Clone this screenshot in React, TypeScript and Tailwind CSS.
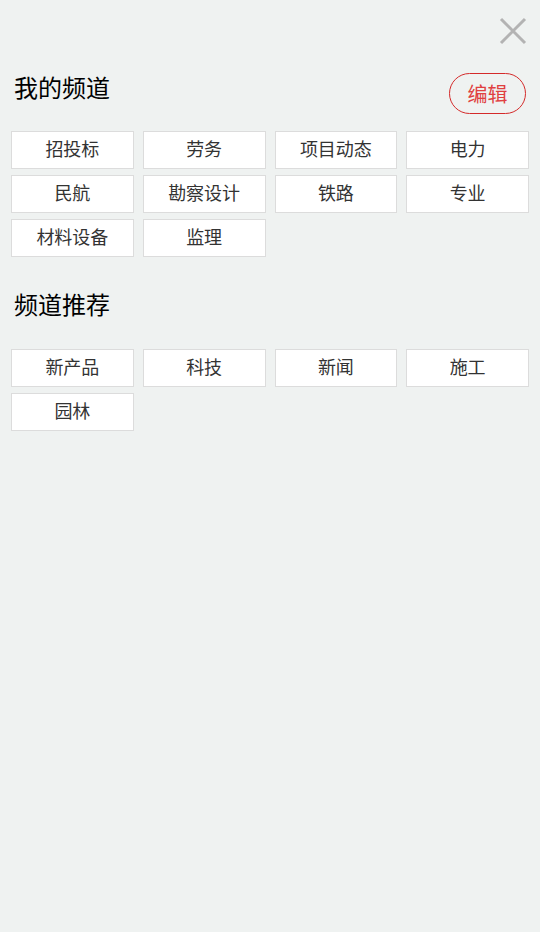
import React from 'react';

const myChannels = ['招投标', '劳务', '项目动态', '电力', '民航', '勘察设计', '铁路', '专业', '材料设备', '监理'];
const recommended = ['新产品', '科技', '新闻', '施工', '园林'];

function ChannelGrid({ items }: { items: string[] }) {
  return (
    <div className="grid grid-cols-4 gap-x-[9px] gap-y-[6px] px-[11px]">
      {items.map((name) => (
        <div
          key={name}
          className="h-[38px] flex items-center justify-center pb-[3px] bg-white border border-[#dcdcdc] text-[18px] text-[#333]"
        >
          {name}
        </div>
      ))}
    </div>
  );
}

export default function App() {
  return (
    <div
      className="w-[540px] h-[932px] bg-[#eff2f1] overflow-hidden"
      style={{ fontFamily: '"Noto Sans CJK SC", "Noto Sans", sans-serif' }}
    >
      <div className="flex justify-end pt-[16px] pr-[12px] h-[66px]">
        <svg width="30" height="30" viewBox="0 0 30 30">
          <path d="M3 3 L27 27 M27 3 L3 27" stroke="#b3b3b3" strokeWidth="3" />
        </svg>
      </div>

      <div className="flex items-start justify-between pl-[14px] pr-[14px] h-[48px] mb-[17px]">
        <h2 className="text-[24px] leading-none text-black mt-[9px]">我的频道</h2>
        <button className="w-[77px] h-[41px] mt-[7px] rounded-full border border-[#d42a2a] text-[#e04040] text-[20px] leading-none">
          编辑
        </button>
      </div>

      <ChannelGrid items={myChannels} />

      <div className="pl-[14px] pt-[35px] h-[92px]">
        <h2 className="text-[24px] leading-none text-black">频道推荐</h2>
      </div>

      <ChannelGrid items={recommended} />
    </div>
  );
}
